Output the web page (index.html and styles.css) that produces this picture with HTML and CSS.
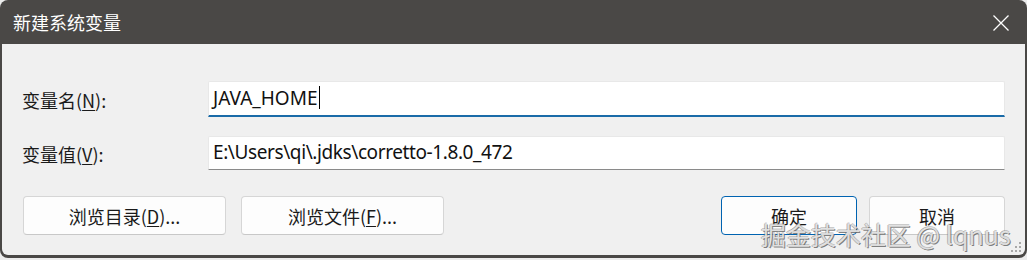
FILE: index.html
```html
<!DOCTYPE html>
<html lang="zh-CN">
<head>
<meta charset="utf-8">
<link rel="stylesheet" href="styles.css">
</head>
<body>
<div class="window">
  <div class="titlebar">
    <span class="title">新建系统变量</span>
    <svg class="close" width="16" height="16" viewBox="0 0 16 16"><path d="M0.5 0.5 L15.5 15.5 M15.5 0.5 L0.5 15.5" stroke="#ffffff" stroke-width="1.3" fill="none"/></svg>
  </div>
  <div class="content">
    <div class="field">
      <div class="label">变量名(<u>N</u>):</div>
      <div class="input focused"><span class="value">JAVA_HOME</span><span class="caret"></span></div>
    </div>
    <div class="field second">
      <div class="label">变量值(<u>V</u>):</div>
      <div class="input"><span class="value path">E:\Users\qi\.jdks\corretto-1.8.0_472</span></div>
    </div>
    <div class="buttons">
      <div class="group wide">
        <div class="btn">浏览目录(<u>D</u>)...</div>
        <div class="btn">浏览文件(<u>F</u>)...</div>
      </div>
      <div class="group narrow">
        <div class="btn primary">确定</div>
        <div class="btn">取消</div>
      </div>
    </div>
    <svg class="grip" width="12" height="12" viewBox="0 0 12 12">
      <rect x="9" y="0" width="2" height="2" fill="#a8a8a8"/>
      <rect x="5" y="4" width="2" height="2" fill="#a8a8a8"/>
      <rect x="9" y="4" width="2" height="2" fill="#a8a8a8"/>
      <rect x="1" y="8" width="2" height="2" fill="#a8a8a8"/>
      <rect x="5" y="8" width="2" height="2" fill="#a8a8a8"/>
      <rect x="9" y="8" width="2" height="2" fill="#a8a8a8"/>
    </svg>
  </div>
  <div class="watermark">掘金技术社区 @ lqnus</div>
</div>
</body>
</html>
```
FILE: styles.css
```css
html, body {
  margin: 0;
  padding: 0;
  background: #ececec;
}
body {
  width: 1027px;
  height: 260px;
  overflow: hidden;
}
.window {
  position: relative;
  width: 1027px;
  height: 258px;
  box-sizing: border-box;
  background: #4a4846;
  border-radius: 8px;
  padding: 0 2px 3px 2px;
  display: flex;
  flex-direction: column;
  font-family: "Noto Sans CJK SC", "Noto Sans", sans-serif;
}
.titlebar {
  height: 44px;
  flex: none;
  display: flex;
  align-items: center;
  justify-content: space-between;
  padding: 0 16px 0 11px;
}
.title {
  color: #ffffff;
  font-size: 18px;
  line-height: 20px;
}
.close {
  display: block;
  margin-top: 1px;
}
.content {
  position: relative;
  flex: 1;
  background: #f0f0f0;
  border-radius: 0 0 6px 6px;
  padding: 37px 20px 20px 20px;
  display: flex;
  flex-direction: column;
}
.field {
  display: flex;
  align-items: center;
}
.field.second {
  margin-top: 19px;
}
.label {
  width: 186px;
  flex: none;
  font-size: 18px;
  color: #1a1a1a;
  padding-top: 1px;
}
.label u, .btn u {
  text-underline-offset: 2px;
  text-decoration-thickness: 1px;
}
.input {
  flex: 1;
  height: 34px;
  box-sizing: border-box;
  background: #ffffff;
  border: 1px solid #e8e8e8;
  border-bottom: 1px solid #8a8a8a;
  border-radius: 2px 2px 0 0;
  display: flex;
  align-items: center;
  padding: 0 0 3px 4px;
  font-family: "Noto Sans", "Noto Sans CJK SC", sans-serif;
  font-size: 19px;
  color: #111111;
}
.value.path {
  letter-spacing: -0.4px;
}
.input.focused {
  height: 36px;
  border-bottom: 2px solid #1a6ba8;
  padding-bottom: 2px;
}
.caret {
  display: block;
  width: 1px;
  height: 23px;
  background: #000000;
  margin-left: 1px;
}
.buttons {
  margin-top: 26px;
  display: flex;
  justify-content: space-between;
}
.group {
  display: flex;
}
.group.wide {
  gap: 15px;
  margin-left: 1px;
}
.group.wide .btn {
  width: 203px;
}
.group.narrow {
  gap: 12px;
}
.group.narrow .btn {
  width: 136px;
}
.btn {
  height: 39px;
  box-sizing: border-box;
  background: #fdfdfd;
  border: 1px solid #d6d6d6;
  border-bottom-color: #c8c8c8;
  border-radius: 4px;
  display: flex;
  align-items: center;
  justify-content: center;
  font-size: 18px;
  color: #1a1a1a;
}
.btn.primary {
  border: 1px solid #0063b1;
}
.grip {
  position: absolute;
  right: 3px;
  bottom: 1px;
}
.watermark {
  position: absolute;
  left: 761px;
  top: 218px;
  font-family: "Noto Sans CJK SC", "Noto Sans", sans-serif;
  font-size: 25px;
  line-height: 32px;
  color: rgba(235, 235, 235, 0.9);
  text-shadow: 1px 1px 0 rgba(90, 90, 90, 0.75), -1px 0 0 rgba(120, 120, 120, 0.5), 0 -1px 0 rgba(120,120,120,0.4);
  white-space: nowrap;
}
```
